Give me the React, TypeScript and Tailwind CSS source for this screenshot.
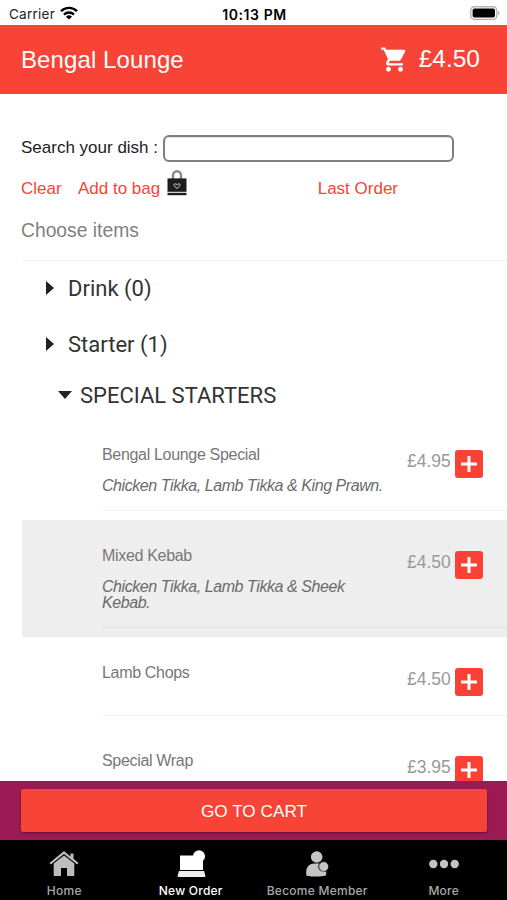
import React from "react";
import { MdShoppingCart } from "react-icons/md";

interface MenuItem {
  name: string;
  description?: string;
  price: string;
  highlighted?: boolean;
}

const menuItems: MenuItem[] = [
  {
    name: "Bengal Lounge Special",
    description: "Chicken Tikka, Lamb Tikka & King Prawn.",
    price: "£4.95",
  },
  {
    name: "Mixed Kebab",
    description: "Chicken Tikka, Lamb Tikka & Sheek Kebab.",
    price: "£4.50",
    highlighted: true,
  },
  { name: "Lamb Chops", price: "£4.50" },
  { name: "Special Wrap", price: "£3.95" },
];

const StatusBar: React.FC = () => (
  <div className="grid h-[25px] shrink-0 grid-cols-3 items-center bg-white pt-[3px] pr-[7px] pl-[9px] font-['Inter','Liberation_Sans',sans-serif] text-[#222]">
    <div className="flex items-center gap-[5px]">
      <span className="text-[13.5px] tracking-[0.25px]">Carrier</span>
      <svg width="18" height="14" viewBox="0 0 18 14" className="-mt-0.5" fill="none" stroke="#000" strokeWidth="2.4">
        <path d="M1 5.2a11.4 11.4 0 0 1 16 0" />
        <path d="M4 8.6a7.1 7.1 0 0 1 10 0" />
        <path d="M9 13.6 6 10.8a4.3 4.3 0 0 1 6 0z" fill="#000" stroke="none" />
      </svg>
    </div>
    <span className="text-center text-[14px] font-semibold tracking-[0.6px] whitespace-nowrap text-black">10:13 PM</span>
    <svg width="31" height="14" viewBox="0 0 31 14" className="-mt-0.5 justify-self-end">
      <rect x="1.8" y="0.8" width="26" height="12.6" rx="3.6" fill="#fff" stroke="#b5b5b5" strokeWidth="1.4" />
      <rect x="3.600" y="2.6" width="22.4" height="9" rx="1.8" fill="#000" />
      <path d="M29.2 4.8c1.6.6 1.6 4 0 4.6z" fill="#aaa" />
    </svg>
  </div>
);

const Header: React.FC = () => (
  <header className="flex h-[69px] shrink-0 items-center justify-between bg-[#f74436] pr-[27px] pl-[21px] text-white">
    <h1 className="text-[24px] tracking-[0.1px]">Bengal Lounge</h1>
    <div className="flex items-center gap-[10px]">
      <MdShoppingCart size={29} />
      <span className="text-[24.5px]">£4.50</span>
    </div>
  </header>
);

const BagIcon: React.FC = () => (
  <svg width="20" height="26" viewBox="0 0 20 26" className="shrink-0">
    <path d="M6 9V5.2a4 4 0 0 1 8 0V9" fill="none" stroke="#888" strokeWidth="2.4" />
    <path d="M.5 8.4h19v13.4H.5z" fill="#1d1d1f" />
    <path d="M.5 22.8h19v2.4H.5z" fill="#1d1d1f" />
    <path d="M10 18.6 7 15.4c-.5-1.8 1.9-2 3-.6 1.1-1.4 3.5-1.2 3 .6z" fill="none" stroke="#ddd" strokeWidth="1" />
  </svg>
);

const SearchPanel: React.FC = () => (
  <section className="px-[21px] pt-[41px]">
    <div className="flex h-[27px] items-center gap-[4px]">
      <label htmlFor="dish" className="-mt-[2px] w-[138px] shrink-0 text-[17px] whitespace-nowrap text-[#222]">
        Search your dish :
      </label>
      <input
        id="dish"
        className="h-[27px] w-[291px] rounded-[6px] border-2 border-[#808080] bg-white shadow-[inset_0_1px_1px_#ddd] outline-none"
      />
    </div>
    <div className="mt-[7px] flex h-[40px] items-center text-[17px] text-[#f74436]">
      <button className="w-[57px] text-left">Clear</button>
      <button className="flex items-center gap-[7px] whitespace-nowrap">
        Add to bag
        <span className="-mt-3">
          <BagIcon />
        </span>
      </button>
      <button className="mr-[88px] ml-auto">Last Order</button>
    </div>
    <p className="mt-[8px] text-[19.3px] leading-[28px] text-[#808080]">Choose items</p>
  </section>
);

const Category: React.FC<{ title: string }> = ({ title }) => (
  <div className="flex h-[56px] items-center gap-[14px] pl-[46px] text-[22px] text-[#333]">
    <svg width="8" height="14" viewBox="0 0 8 14">
      <path d="M0 0 8 7 0 14z" fill="#222" />
    </svg>
    {title}
  </div>
);

const ItemRow: React.FC<{ item: MenuItem }> = ({ item }) => (
  <div className={`ml-[22px] pb-[9px] pl-[80px] ${item.highlighted ? "bg-[#eee]" : ""}`}>
    <div
      className={`flex min-h-[79px] items-start border-b ${
        item.highlighted ? "border-[#e2e2e2]" : "border-[#f2f2f2]"
      }`}
    >
      <div className="w-[300px] pt-[26px] pb-[16px] text-[#777]">
        <p className="text-[16px] leading-[20px] tracking-[-0.32px] whitespace-nowrap">{item.name}</p>
        {item.description && (
          <p className="mt-[13px] w-[286px] text-[16px] leading-[16px] tracking-[-0.43px] text-[#6a6a6a] italic">
            {item.description}
          </p>
        )}
      </div>
      <div className="ml-[5px] flex items-start pt-[30px]">
        <span className="w-[48px] text-[17.5px] leading-[24px] text-[#999]">{item.price}</span>
        <button className="mt-[1px] flex size-[28px] items-center justify-center rounded-[3px] bg-[#fb4034]">
          <svg width="16" height="16" viewBox="0 0 16 16" stroke="#fff" strokeWidth="3">
            <path d="M8 0v16M0 8h16" />
          </svg>
        </button>
      </div>
    </div>
  </div>
);

const HomeIcon: React.FC = () => (
  <svg width="30" height="26" viewBox="0 0 30 26" fill="#bdbdbd">
    <path d="M15 0 .5 12l1.3 1.5L15 3l13.2 10.500 1.300-1.500-5-4.200V2.500h-3v3z" />
    <path d="M15 4.400 4.700 12.600V25h7.300v-8h6v8h7.300V12.600z" />
  </svg>
);

const NewOrderIcon: React.FC = () => (
  <svg width="30" height="27" viewBox="0 0 30 27" fill="#fff">
    <path d="M4 5.500h23V20H4z" />
    <circle cx="23" cy="6.200" r="6" />
    <path d="M3 20.900h25l1.500 5.100c0 .6-.4.900-1 .9h-26c-.7 0-1-.4-1-.9z" fill="#eee" />
  </svg>
);

const MemberIcon: React.FC = () => (
  <svg width="24" height="26" viewBox="0 0 24 26" fill="#c4c4c4">
    <circle cx="11.700" cy="6" r="5.800" />
    <path d="M1.200 24v-3c0-5.200 3.500-8.500 8.500-8.500h4c4.500 0 7.500 3.500 7.500 8v3.500c-1 1.300-6 1.500-10 1.500s-10 0-10-1.500z" />
    <circle cx="18.700" cy="15.600" r="5" stroke="#111" strokeWidth="1" />
    <path d="M14 21.800c2.200-1.300 4.800-1.300 7 0" fill="none" stroke="#c4c4c4" strokeWidth="1" />
  </svg>
);

const MoreIcon: React.FC = () => (
  <svg width="30" height="26" viewBox="0 0 30 26" fill="#c4c4c4">
    <circle cx="4.300" cy="13" r="4.200" />
    <circle cx="15" cy="13" r="4.200" />
    <circle cx="25.700" cy="13" r="4.200" />
  </svg>
);

const tabs = [
  { label: "Home", icon: <HomeIcon />, active: false },
  { label: "New Order", icon: <NewOrderIcon />, active: true },
  { label: "Become Member", icon: <MemberIcon />, active: false },
  { label: "More", icon: <MoreIcon />, active: false },
];

const TabBar: React.FC = () => (
  <nav className="grid h-[60px] shrink-0 grid-cols-4 bg-black pt-[10px] pl-[1px] font-['Inter','Liberation_Sans',sans-serif]">
    {tabs.map((tab) => (
      <button
        key={tab.label}
        className={`flex flex-col items-center text-[12px] font-medium tracking-[0.25px] whitespace-nowrap ${
          tab.active ? "text-white" : "text-[#a8a8a8]"
        }`}
      >
        <span className="flex h-[27px] items-center">{tab.icon}</span>
        <span className="mt-[6px] leading-[16px]">{tab.label}</span>
      </button>
    ))}
  </nav>
);

const App: React.FC = () => {
  return (
    <div className="flex h-[900px] w-[507px] flex-col overflow-hidden bg-white font-['Liberation_Sans',Arial,sans-serif]">
      <StatusBar />
      <Header />
      <main className="min-h-0 flex-1 overflow-hidden">
        <SearchPanel />
        <div className="mt-[15px] ml-[22px] border-t border-[#f0f0f0]" />
        <div className="-mt-[1px] pb-[1px] font-['Roboto',sans-serif]">
          <Category title="Drink (0)" />
          <Category title="Starter (1)" />
          <div className="flex h-[46px] items-center gap-[8px] pl-[58px] text-[22px] text-[#333]">
            <svg width="14" height="8" viewBox="0 0 14 8">
              <path d="M0 0h14L7 8z" fill="#222" />
            </svg>
            SPECIAL STARTERS
          </div>
        </div>
        {menuItems.map((item) => (
          <ItemRow key={item.name} item={item} />
        ))}
      </main>
      <div className="h-[59px] shrink-0 bg-[#9c1b55] pt-[8px] pr-[20px] pl-[21px]">
        <button className="h-[43px] w-full rounded-[2px] bg-[#f74436] pt-[2px] text-[17.2px] text-white shadow-[0_1px_3px_rgba(0,0,0,0.4)]">
          GO TO CART
        </button>
      </div>
      <TabBar />
    </div>
  );
};

export default App;
